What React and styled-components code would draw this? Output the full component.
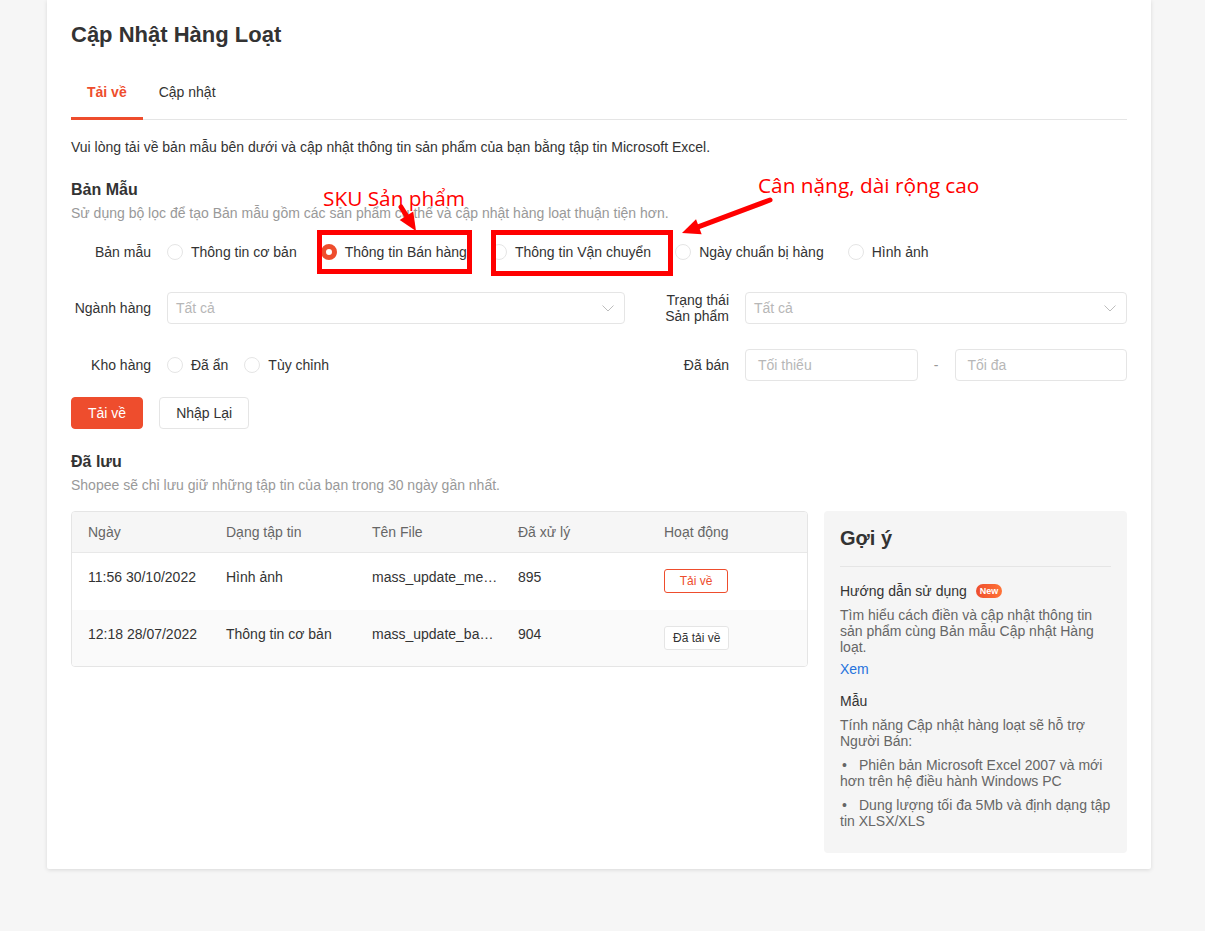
import React from "react"
import styled, { createGlobalStyle } from "styled-components"

const GlobalStyle = createGlobalStyle`
  body {
    margin: 0;
    background: #f6f6f6;
    font-family: "Liberation Sans", Arial, Helvetica, sans-serif;
    font-size: 14px;
    color: #333;
  }
`

const Page = styled.div`
  padding: 0 54px 62px 47px;
`

const Card = styled.div`
  position: relative;
  background: #fff;
  box-shadow: 0 1px 4px rgba(0, 0, 0, 0.12);
  border-radius: 0 0 2px 2px;
  padding: 19px 24px 16px;
`

const Title = styled.h1`
  margin: 0;
  font-size: 22px;
  line-height: 32px;
  font-weight: 700;
  color: #333;
`

const TabBar = styled.div`
  display: flex;
  margin-top: 11px;
  border-bottom: 1px solid #e5e5e5;
`

const Tab = styled.div`
  padding: 6px 16px 0;
  height: 49px;
  line-height: 49px;
  font-size: 14px;
  font-weight: ${(p) => (p.$active ? 700 : 400)};
  color: ${(p) => (p.$active ? "#ee4d2d" : "#333")};
  border-bottom: 3px solid ${(p) => (p.$active ? "#ee4d2d" : "transparent")};
  margin-bottom: -1px;
`

const Intro = styled.p`
  margin: 17px 0 0;
  line-height: 20px;
`

const SectionTitle = styled.h2`
  margin: ${(p) => p.$top || "24px"} 0 0;
  font-size: 16px;
  line-height: 22px;
  font-weight: 700;
`

const SectionHint = styled.p`
  margin: 2px 0 0;
  color: #999;
  line-height: 20px;
`

const FormRow = styled.div`
  display: flex;
  align-items: center;
  min-height: 32px;
  margin-top: ${(p) => p.$top || "24px"};
`

const FormGrid = styled.div`
  display: grid;
  grid-template-columns: 554px 1fr;
  column-gap: 24px;
  margin-top: ${(p) => p.$top || "24px"};
`

const Field = styled.div`
  display: flex;
  align-items: center;
  min-height: 32px;
`

const Label = styled.div`
  flex: 0 0 80px;
  padding-right: 16px;
  text-align: right;
  line-height: 16px;
`

const RadioGroup = styled.div`
  display: flex;
  align-items: center;
  gap: ${(p) => p.$gap || "24px"};
`

const RadioItem = styled.label`
  display: flex;
  align-items: center;
  gap: 8px;
  line-height: 20px;
  white-space: nowrap;
`

const RadioDot = styled.span`
  width: 16px;
  height: 16px;
  box-sizing: border-box;
  border-radius: 50%;
  border: ${(p) => (p.$checked ? "5px solid #ee4d2d" : "1px solid #e5e5e5")};
  background: #fff;
`

const Select = styled.div`
  flex: 1;
  height: 32px;
  box-sizing: border-box;
  border: 1px solid #e5e5e5;
  border-radius: 4px;
  display: flex;
  align-items: center;
  justify-content: space-between;
  padding: 0 10px 0 8px;
  color: #b7b7b7;
`

const Input = styled.div`
  flex: 1;
  height: 32px;
  box-sizing: border-box;
  border: 1px solid #e5e5e5;
  border-radius: 4px;
  display: flex;
  align-items: center;
  padding: 0 12px;
  color: #b7b7b7;
`

const Dash = styled.span`
  width: 37px;
  text-align: center;
  color: #999;
`

const Actions = styled.div`
  display: flex;
  gap: 16px;
  margin-top: 16px;
`

const Button = styled.button`
  height: 32px;
  padding: 0 16px;
  border-radius: 4px;
  font-family: inherit;
  font-size: 14px;
  border: 1px solid ${(p) => (p.$primary ? "#ee4d2d" : "#e5e5e5")};
  background: ${(p) => (p.$primary ? "#ee4d2d" : "#fff")};
  color: ${(p) => (p.$primary ? "#fff" : "#333")};
`

const Bottom = styled.div`
  display: flex;
  align-items: flex-start;
  gap: 16px;
  margin-top: 16px;
`

const Table = styled.div`
  flex: 0 0 735px;
  border: 1px solid #e5e5e5;
  border-radius: 4px;
  overflow: hidden;
`

const TRow = styled.div`
  display: grid;
  grid-template-columns: 138px 146px 146px 146px 1fr;
  background: ${(p) => p.$bg || "#fff"};
  height: ${(p) => p.$h || "56px"};
  align-items: ${(p) => (p.$head ? "center" : "start")};
  color: ${(p) => (p.$head ? "#666" : "#333")};
  border-bottom: ${(p) => (p.$head ? "1px solid #e8e8e8" : "none")};
`

const Cell = styled.div`
  padding: ${(p) => (p.$head ? "0 4px 0 16px" : "14px 4px 0 16px")};
  line-height: 20px;
  white-space: nowrap;
  overflow: hidden;
  text-overflow: ellipsis;
`

const SmallButton = styled.button`
  margin-top: 2px;
  height: 24px;
  min-width: 64px;
  padding: 0 8px;
  border-radius: 3px;
  font-family: inherit;
  font-size: 12px;
  background: #fff;
  border: 1px solid ${(p) => (p.$accent ? "#ee4d2d" : "#e5e5e5")};
  color: ${(p) => (p.$accent ? "#ee4d2d" : "#333")};
`

const Tips = styled.aside`
  flex: 1;
  background: #f5f5f5;
  border-radius: 4px;
  padding: 13px 16px 24px;
`

const TipsTitle = styled.h3`
  margin: 0;
  font-size: 20px;
  line-height: 28px;
  font-weight: 700;
  padding-bottom: 14px;
  border-bottom: 1px solid #e5e5e5;
`

const TipHead = styled.div`
  display: flex;
  align-items: center;
  gap: 9px;
  margin-top: ${(p) => p.$top || "14px"};
  line-height: 20px;
`

const NewBadge = styled.span`
  height: 14px;
  padding: 0 4px;
  border-radius: 7px;
  background: linear-gradient(90deg, #ee4d2d, #ff7337);
  color: #fff;
  font-size: 9px;
  font-weight: 700;
  line-height: 14px;
`

const TipText = styled.p`
  margin: ${(p) => p.$top || "6px"} 0 0;
  color: #666;
  line-height: 16px;
`

const TipLink = styled.a`
  display: block;
  margin-top: 6px;
  color: #2673dd;
  line-height: 16px;
  text-decoration: none;
`

const Dot = styled.span`
  display: inline-block;
  box-sizing: border-box;
  width: 19px;
  padding-left: 2px;
`

const Annotation = styled.div`
  position: absolute;
  left: ${(p) => p.$x}px;
  top: ${(p) => p.$y}px;
  color: #ff0000;
  font-family: "Open Sans", "Noto Sans", sans-serif;
  font-size: ${(p) => p.$size}px;
  line-height: 24px;
  white-space: nowrap;
  pointer-events: none;
`

const Frame = styled.div`
  position: absolute;
  left: ${(p) => p.$x}px;
  top: ${(p) => p.$y}px;
  width: ${(p) => p.$w}px;
  height: ${(p) => p.$h}px;
  box-sizing: border-box;
  border: 5px solid #ff0000;
  pointer-events: none;
`

const Overlay = styled.svg`
  position: absolute;
  left: 0;
  top: 0;
  pointer-events: none;
`

const Chevron = () => (
  <svg width="12" height="7" viewBox="0 0 12 7">
    <polyline points="0.5,0.5 6,6 11.5,0.5" fill="none" stroke="#bdbdbd" strokeWidth="1" />
  </svg>
)

function Arrow({ x1, y1, x2, y2 }) {
  const dx = x2 - x1
  const dy = y2 - y1
  const len = Math.hypot(dx, dy)
  const ux = dx / len
  const uy = dy / len
  const hl = 18
  const hw = 8
  const bx = x2 - ux * hl
  const by = y2 - uy * hl
  const pts = `${x2},${y2} ${bx - uy * hw},${by + ux * hw} ${bx + uy * hw},${by - ux * hw}`
  return (
    <g>
      <line x1={x1} y1={y1} x2={bx} y2={by} stroke="#ff0000" strokeWidth="5" strokeLinecap="round" />
      <polygon points={pts} fill="#ff0000" />
    </g>
  )
}

const templates = ["Thông tin cơ bản", "Thông tin Bán hàng", "Thông tin Vận chuyển", "Ngày chuẩn bị hàng", "Hình ảnh"]

const files = [
  { date: "11:56 30/10/2022", type: "Hình ảnh", name: "mass_update_media_info_2022.xlsx", count: "895", action: "Tải về", accent: true },
  { date: "12:18 28/07/2022", type: "Thông tin cơ bản", name: "mass_update_basic_info_2022.xlsx", count: "904", action: "Đã tải về" },
]

export default function App() {
  return (
    <>
      <GlobalStyle />
      <Page>
        <Card>
          <Title>Cập Nhật Hàng Loạt</Title>
          <TabBar>
            <Tab $active>Tải về</Tab>
            <Tab>Cập nhật</Tab>
          </TabBar>
          <Intro>Vui lòng tải về bản mẫu bên dưới và cập nhật thông tin sản phẩm của bạn bằng tập tin Microsoft Excel.</Intro>

          <SectionTitle $top="22px">Bản Mẫu</SectionTitle>
          <SectionHint>Sử dụng bộ lọc để tạo Bản mẫu gồm các sản phẩm cụ thể và cập nhật hàng loạt thuận tiện hơn.</SectionHint>

          <FormRow $top="13px">
            <Label>Bản mẫu</Label>
            <RadioGroup>
              {templates.map((t, i) => (
                <RadioItem key={t}>
                  <RadioDot $checked={i === 1} />
                  {t}
                </RadioItem>
              ))}
            </RadioGroup>
          </FormRow>

          <FormGrid>
            <Field>
              <Label>Ngành hàng</Label>
              <Select>
                Tất cả
                <Chevron />
              </Select>
            </Field>
            <Field>
              <Label>
                Trạng thái
                <br />
                Sản phẩm
              </Label>
              <Select>
                Tất cả
                <Chevron />
              </Select>
            </Field>
          </FormGrid>

          <FormGrid $top="25px">
            <Field>
              <Label>Kho hàng</Label>
              <RadioGroup $gap="16px">
                <RadioItem>
                  <RadioDot />
                  Đã ẩn
                </RadioItem>
                <RadioItem>
                  <RadioDot />
                  Tùy chỉnh
                </RadioItem>
              </RadioGroup>
            </Field>
            <Field>
              <Label>Đã bán</Label>
              <Input>Tối thiểu</Input>
              <Dash>-</Dash>
              <Input>Tối đa</Input>
            </Field>
          </FormGrid>

          <Actions>
            <Button $primary>Tải về</Button>
            <Button>Nhập Lại</Button>
          </Actions>

          <SectionTitle $top="22px">Đã lưu</SectionTitle>
          <SectionHint>Shopee sẽ chỉ lưu giữ những tập tin của bạn trong 30 ngày gần nhất.</SectionHint>

          <Bottom>
            <Table>
              <TRow $head $bg="#f6f6f6" $h="40px">
                <Cell $head>Ngày</Cell>
                <Cell $head>Dạng tập tin</Cell>
                <Cell $head>Tên File</Cell>
                <Cell $head>Đã xử lý</Cell>
                <Cell $head>Hoạt động</Cell>
              </TRow>
              {files.map((f, i) => (
                <TRow key={f.date} $bg={i % 2 ? "#fafafa" : "#fff"} $h={i ? "56px" : "57px"}>
                  <Cell>{f.date}</Cell>
                  <Cell>{f.type}</Cell>
                  <Cell>{f.name}</Cell>
                  <Cell>{f.count}</Cell>
                  <Cell>
                    <SmallButton $accent={f.accent}>{f.action}</SmallButton>
                  </Cell>
                </TRow>
              ))}
            </Table>

            <Tips>
              <TipsTitle>Gợi ý</TipsTitle>
              <TipHead>
                Hướng dẫn sử dụng
                <NewBadge>New</NewBadge>
              </TipHead>
              <TipText>Tìm hiểu cách điền và cập nhật thông tin sản phẩm cùng Bản mẫu Cập nhật Hàng loạt.</TipText>
              <TipLink href="#">Xem</TipLink>
              <TipHead $top="14px">Mẫu</TipHead>
              <TipText>Tính năng Cập nhật hàng loạt sẽ hỗ trợ Người Bán:</TipText>
              <TipText $top="8px">
                <Dot>•</Dot>Phiên bản Microsoft Excel 2007 và mới hơn trên hệ điều hành Windows PC
              </TipText>
              <TipText $top="8px">
                <Dot>•</Dot>Dung lượng tối đa 5Mb và định dạng tập tin XLSX/XLS
              </TipText>
            </Tips>
          </Bottom>

          <Frame $x={270} $y={230} $w={155} $h={44} />
          <Frame $x={444} $y={230} $w={182} $h={46} />
          <Annotation $x={276} $y={186} $size={20.8}>SKU Sản phẩm</Annotation>
          <Annotation $x={711} $y={173} $size={20.8}>Cân nặng, dài rộng cao</Annotation>
          <Overlay width="1104" height="300">
            <Arrow x1={354} y1={207} x2={369} y2={231} />
            <Arrow x1={723} y1={200} x2={635} y2={233} />
          </Overlay>
        </Card>
      </Page>
    </>
  )
}
